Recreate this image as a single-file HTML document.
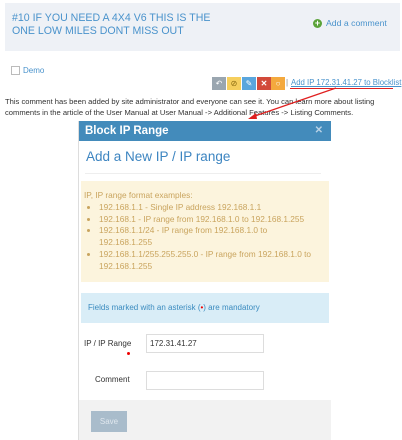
<!DOCTYPE html>
<html><head><meta charset="utf-8"><style>
*{margin:0;padding:0;box-sizing:border-box}
body{width:402px;height:440px;overflow:hidden;background:#fff;font-family:"Liberation Sans",sans-serif;position:relative;color:#333}
.abs{position:absolute}
.hdr{left:5px;top:3px;width:395px;height:48px;background:#eef1f6}
.title{left:12px;top:12px;font-size:10.6px;line-height:13px;color:#4a93cc;white-space:nowrap}
.btn{top:77px;width:14px;height:13px;color:#fff;font-size:8px;text-align:center;line-height:13px}
.modal{left:78px;top:121px;width:252px;height:319px;background:#fff;border-left:1px solid #ddd}
.mh{left:0;top:0;width:252px;height:20px;background:#438bbb;color:#fff;font-size:11.5px;font-weight:bold;line-height:20px;padding-left:6px}
.yl{left:2px;top:60px;width:248px;height:101px;background:#fcf4dd;color:#c9a45e;font-size:8.3px;line-height:11.8px;padding:9px 3px}
.yl ul{padding-left:15px}
.inp{left:67px;width:118px;height:19px;border:1px solid #ddd;font-size:8px;padding:4px 3px}
.lbl{font-size:8px;color:#333}
</style></head><body>
<div class="abs hdr"></div>
<div class="abs title">#10 IF YOU NEED A 4X4 V6 THIS IS THE<br>ONE LOW MILES DONT MISS OUT</div>
<div class="abs" style="left:313px;top:19px;width:9px;height:9px;border-radius:50%;background:#5aa339;color:#fff;font-size:9px;line-height:9px;text-align:center;font-weight:bold">+</div>
<div class="abs" style="left:326px;top:18px;font-size:8.7px;color:#4a93cc;white-space:nowrap">Add a comment</div>
<div class="abs" style="left:11px;top:66px;width:9px;height:9px;border:1px solid #bbb"></div>
<div class="abs" style="left:23px;top:66px;font-size:8px;color:#4a93cc">Demo</div>
<div class="abs btn" style="left:212px;background:#9aa6b0">↶</div>
<div class="abs btn" style="left:227px;background:#f6cf5e;color:#8a6a10">⊘</div>
<div class="abs btn" style="left:242px;background:#5aa6dd">✎</div>
<div class="abs btn" style="left:257px;background:#d24a3a;font-weight:bold">✕</div>
<div class="abs btn" style="left:271px;background:#f4a93e">○</div>
<div class="abs" style="left:286px;top:78px;font-size:8px;color:#888">|</div>
<div class="abs" style="left:291px;top:78px;font-size:7.8px;color:#4a93cc;text-decoration:underline;white-space:nowrap">Add IP 172.31.41.27 to Blocklist</div>
<div class="abs" style="left:290px;top:88px;width:103px;height:1px;background:#e02020"></div>
<div class="abs" style="left:5px;top:96px;width:397px;font-size:7.6px;line-height:11px;color:#333">This comment has been added by site administrator and everyone can see it. You can learn more about listing comments in the article of the User Manual at User Manual -&gt; Additional Features -&gt; Listing Comments.</div>
<div class="abs modal">
<div class="abs mh">Block IP Range<span style="position:absolute;right:8px;font-size:10px;color:#b8d2e6">✕</span></div>
<div class="abs" style="left:7px;top:28px;font-size:13.5px;color:#3d85c1">Add a New IP / IP range</div>
<div class="abs" style="left:6px;top:52px;width:236px;height:1px;background:#eee"></div>
<div class="abs yl">IP, IP range format examples:<ul>
<li>192.168.1.1 - Single IP address 192.168.1.1</li>
<li>192.168.1 - IP range from 192.168.1.0 to 192.168.1.255</li>
<li>192.168.1.1/24 - IP range from 192.168.1.0 to<br>192.168.1.255</li>
<li>192.168.1.1/255.255.255.0 - IP range from 192.168.1.0 to<br>192.168.1.255</li></ul></div>
<div class="abs" style="left:2px;top:172px;width:248px;height:30px;background:#d9edf7;color:#3a8bbf;font-size:8px;line-height:30px;padding-left:7px">Fields marked with an asterisk (<span style="color:#e00">•</span>) are mandatory</div>
<div class="abs lbl" style="left:5px;top:218px">IP / IP Range</div>
<div class="abs" style="left:48px;top:231px;width:3px;height:3px;border-radius:50%;background:#e00"></div>
<div class="abs inp" style="top:213px">172.31.41.27</div>
<div class="abs lbl" style="left:16px;top:254px">Comment</div>
<div class="abs inp" style="top:250px"></div>
<div class="abs" style="left:0;top:279px;width:252px;height:40px;background:#f2f2f2"></div>
<div class="abs" style="left:12px;top:290px;width:36px;height:21px;background:#a9bccb;color:#dfe7ee;font-size:8px;text-align:center;line-height:21px">Save</div>
</div>
<svg class="abs" style="left:0;top:0" width="402" height="440"><line x1="336" y1="88" x2="252" y2="117" stroke="#e02020" stroke-width="1.2"/><polygon points="248,119 256,113 257,119" fill="#e02020"/></svg>
</body></html>
